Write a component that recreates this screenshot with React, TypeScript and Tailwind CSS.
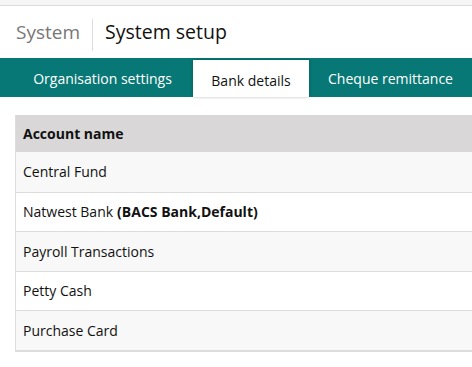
import React from "react";

const rows: { name: string; extra?: string }[] = [
  { name: "Central Fund" },
  { name: "Natwest Bank", extra: "(BACS Bank,Default)" },
  { name: "Payroll Transactions" },
  { name: "Petty Cash" },
  { name: "Purchase Card" },
];

export default function App() {
  return (
    <div
      className="w-[472px] h-[367px] bg-white overflow-hidden text-[#111]"
      style={{ fontFamily: '"Open Sans", "Noto Sans", sans-serif' }}
    >
      <div className="h-[6px] bg-[#f5f5f5] border-b border-[#dcdcdc]" />
      <div className="flex items-center h-[52px] pl-[16px]">
        <span className="text-[19px] text-[#777] leading-none">System</span>
        <div className="w-px h-[32px] bg-[#dcdcdc] mx-[12px] mt-[6px]" />
        <span className="text-[19.5px] text-[#111] leading-none">System setup</span>
      </div>
      <div className="h-[39px] bg-[#077875] flex items-end text-[14px]">
        <div className="w-[193px] h-full flex items-center justify-center text-white pl-[12px] pt-[1px]">
          Organisation settings
        </div>
        <div className="w-[116px] h-[37px] bg-white flex items-center justify-center text-[#111] shadow-[0_0_3px_rgba(0,0,0,0.25)] pt-[3px]">
          Bank details
        </div>
        <div className="w-[163px] h-full flex items-center justify-center text-white pt-[1px]">
          Cheque remittance
        </div>
      </div>
      <div className="pl-[15px] pt-[18px]">
        <div className="border-l border-[#dcdcdc] border-b-2 border-b-[#dcdcdc]">
          <div className="h-[37px] bg-[#d9d7d8] flex items-center pl-[7px] text-[14px] font-bold">
            Account name
          </div>
          {rows.map((r, i) => (
            <div
              key={r.name}
              className={`h-[39.5px] flex items-center pl-[7px] text-[14px] ${i % 2 === 0 ? "bg-[#f8f8f8]" : "bg-white"} ${i > 0 ? "border-t border-[#dcdcdc]" : ""}`}
            >
              <span>{r.name}</span>
              {r.extra && <span className="font-bold ml-[4px]">{r.extra}</span>}
            </div>
          ))}
        </div>
      </div>
    </div>
  );
}
